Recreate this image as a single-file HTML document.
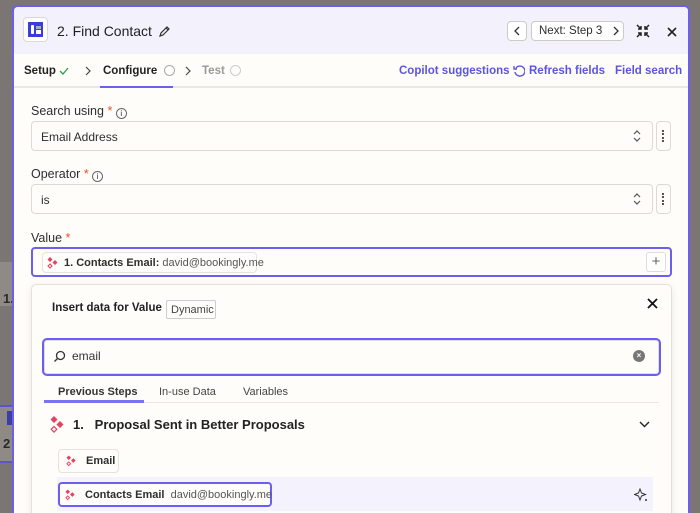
<!DOCTYPE html>
<html><head><meta charset="utf-8"><style>
*{box-sizing:border-box;margin:0;padding:0}
html,body{width:700px;height:513px;overflow:hidden}
body{background:#7b7673;font-family:"Liberation Sans",sans-serif;color:#2d2e2e;position:relative;font-size:13px}
.abs{position:absolute;white-space:nowrap}
svg{flex-shrink:0}
.modal{position:absolute;left:12px;top:5px;width:678px;height:508px;border:2px solid #6a5ff0;border-bottom:none;border-radius:6px 6px 0 0;background:#fffdf9;overflow:hidden}
.hdr{position:absolute;left:0;top:0;right:0;height:47px;background:#f3f2fc}
.tabs{position:absolute;left:0;top:47px;right:0;height:34px;border-bottom:2px solid #ebe8e3}
.lbl{position:absolute;left:17px;font-size:12.5px;color:#2d2e2e;white-space:nowrap}
.req{color:#e8541e}
.inp{position:absolute;left:17px;width:622px;height:30px;border:1px solid #dedad3;border-radius:4px;background:#fffdf9;font-size:12px;padding:8px 9px;white-space:nowrap}
.dots{position:absolute;left:642px;width:15px;height:30px;border:1px solid #dedad3;border-radius:4px}
.link{position:absolute;top:58px;color:#5b54e0;font-size:11.5px;font-weight:bold;white-space:nowrap}
.pill{position:absolute;border:1px solid #e6e2dc;border-radius:4px;background:#fffdf9;font-size:11px;display:flex;align-items:center;white-space:nowrap}
</style></head><body>
<div class="abs" style="left:0;top:262px;width:13px;height:44px;background:#8f8a86"></div>
<div class="abs" style="left:3px;top:291px;font-weight:bold;font-size:13px;color:#2a2a2a">1.</div>
<div class="abs" style="left:0;top:405px;width:13px;height:2px;background:#5a55c8"></div>
<div class="abs" style="left:0;top:407px;width:13px;height:55px;background:#8f8a86"></div>
<div class="abs" style="left:7px;top:411px;width:6px;height:14px;background:#3d3da8"></div>
<div class="abs" style="left:3px;top:436px;font-weight:bold;font-size:13px;color:#2a2a2a">2</div>
<div class="abs" style="left:0;top:461px;width:13px;height:2px;background:#5a55c8"></div>

<div class="modal">
 <div class="hdr">
  <div class="abs" style="left:9px;top:10px;width:25px;height:25px;border:1px solid #dcd9d3;border-radius:4px;background:#fff"></div>
  <div class="abs" style="left:14px;top:15px;width:15px;height:15px;background:#3b3dd8"></div>
  <div class="abs" style="left:17px;top:18px;width:3px;height:9px;background:#fff;border-radius:1px"></div>
  <div class="abs" style="left:22px;top:19px;width:5px;height:3px;background:#aab"></div>
  <div class="abs" style="left:22px;top:23px;width:5px;height:4px;background:#fff"></div>
  <div class="abs" style="left:43px;top:16px;font-size:14px;color:#1f1f1f">2. Find Contact</div>
  <svg class="abs" style="left:144px;top:19px" width="12" height="12" viewBox="0 0 12 12"><path d="M2 10l1-3 6-6 2 2-6 6z M8 2l2 2" fill="none" stroke="#333" stroke-width="1.2"/></svg>
  <div class="abs" style="left:493px;top:14px;width:20px;height:20px;border:1px solid #cfcbc4;border-radius:4px;background:#fff"></div>
  <svg class="abs" style="left:499px;top:19px" width="8" height="10"><path d="M6 1L2 5l4 4" fill="none" stroke="#333" stroke-width="1.3"/></svg>
  <div class="abs" style="left:517px;top:14px;width:93px;height:20px;border:1px solid #cfcbc4;border-radius:4px;background:#fff;font-size:11.5px;padding:3px 0 0 7px">Next: Step 3</div>
  <svg class="abs" style="left:598px;top:19px" width="8" height="10"><path d="M2 1l4 4-4 4" fill="none" stroke="#333" stroke-width="1.3"/></svg>
  <svg class="abs" style="left:622px;top:17px" width="14" height="14" viewBox="0 0 14 14"><path d="M1 1l4 4M5 2v3H2M13 1L9 5M9 2v3h3M1 13l4-4M5 12V9H2M13 13L9 9M9 12V9h3" fill="none" stroke="#222" stroke-width="1.5"/></svg>
  <svg class="abs" style="left:653px;top:20px" width="10" height="10"><path d="M1 1l8 8M9 1L1 9" stroke="#222" stroke-width="1.6"/></svg>
 </div>
 <div class="tabs">
  <div class="abs" style="left:10px;top:11px;font-weight:bold;font-size:11.5px;color:#222">Setup</div>
  <svg class="abs" style="left:45px;top:13px" width="10" height="8"><path d="M1 4l3 3 5-6" fill="none" stroke="#2e9e4a" stroke-width="1.3"/></svg>
  <svg class="abs" style="left:71px;top:12px" width="6" height="10"><path d="M1 1l4 4-4 4" fill="none" stroke="#444" stroke-width="1.2"/></svg>
  <div class="abs" style="left:89px;top:11px;font-weight:bold;font-size:11.5px;color:#222">Configure</div>
  <div class="abs" style="left:150px;top:11px;width:11px;height:11px;border:1px solid #aaa;border-radius:50%"></div>
  <div class="abs" style="left:86px;top:32px;width:73px;height:2px;background:#6a5ff0"></div>
  <svg class="abs" style="left:171px;top:12px" width="6" height="10"><path d="M1 1l4 4-4 4" fill="none" stroke="#444" stroke-width="1.2"/></svg>
  <div class="abs" style="left:188px;top:11px;font-weight:bold;font-size:11.5px;color:#999">Test</div>
  <div class="abs" style="left:216px;top:11px;width:11px;height:11px;border:1px solid #ccc;border-radius:50%"></div>
 </div>
 <div class="link" style="left:385px">Copilot suggestions</div>
 <svg class="abs" style="left:499px;top:57px" width="12" height="13" viewBox="0 0 12 13"><path d="M3 4a5 5 0 1 1-1 4M1 2v3h3" fill="none" stroke="#5b54e0" stroke-width="1.4"/></svg>
 <div class="link" style="left:515px">Refresh fields</div>
 <div class="link" style="left:601px">Field search</div>

 <div class="lbl" style="top:97px">Search using <span class="req">*</span> <span style="display:inline-block;width:11px;height:11px;border:1px solid #666;border-radius:50%;font-size:8px;text-align:center;line-height:9px;vertical-align:-1px">i</span></div>
 <div class="inp" style="top:114px">Email Address</div>
 <svg class="abs" style="left:619px;top:123px" width="8" height="12"><path d="M1 4l3-3 3 3M1 8l3 3 3-3" fill="none" stroke="#555" stroke-width="1.2"/></svg>
 <div class="dots" style="top:114px"></div>
 <div class="abs" style="left:648px;top:123px;width:2px;height:12px;border-left:2px dotted #555"></div>

 <div class="lbl" style="top:160px">Operator <span class="req">*</span> <span style="display:inline-block;width:11px;height:11px;border:1px solid #666;border-radius:50%;font-size:8px;text-align:center;line-height:9px;vertical-align:-1px">i</span></div>
 <div class="inp" style="top:177px">is</div>
 <svg class="abs" style="left:619px;top:186px" width="8" height="12"><path d="M1 4l3-3 3 3M1 8l3 3 3-3" fill="none" stroke="#555" stroke-width="1.2"/></svg>
 <div class="dots" style="top:177px"></div>
 <div class="abs" style="left:648px;top:186px;width:2px;height:12px;border-left:2px dotted #555"></div>

 <div class="lbl" style="top:224px">Value <span class="req">*</span></div>
 <div class="abs" style="left:17px;top:240px;width:641px;height:30px;border:2px solid #6a5ff0;border-radius:4px"></div>
 <div class="pill" style="left:28px;top:245px;width:215px;height:21px;padding-left:4px">
  <svg width="12" height="12" viewBox="0 0 12 12"><path d="M3 0l2.5 2.5L3 5 .5 2.5z M8 3l2.5 2.5L8 8 5.5 5.5z" fill="#e8405f"/><path d="M3 7l2 2-2 2-2-2z" fill="none" stroke="#e8405f" stroke-width="1"/></svg>
  <b style="margin-left:5px">1. Contacts Email:</b>&nbsp;<span style="color:#555">david@bookingly.me</span></div>
 <div class="abs" style="left:632px;top:245px;width:20px;height:20px;border:1px solid #ddd;border-radius:3px;background:#fff;text-align:center;font-size:15px;line-height:17px;color:#666">+</div>

 <div class="abs" style="left:17px;top:277px;width:641px;height:250px;border:1px solid #e4e0da;border-radius:5px;background:#fffdf9;box-shadow:0 2px 8px rgba(0,0,0,.08)">
  <div class="abs" style="left:20px;top:17px;font-weight:bold;font-size:11.5px;color:#222">Insert data for Value</div>
  <div class="abs" style="left:134px;top:15px;width:50px;height:19px;border:1px solid #ccc;border-radius:2px;font-size:11px;color:#444;padding:3px 0 0 4px">Dynamic</div>
  <svg class="abs" style="left:615px;top:13px" width="11" height="11"><path d="M1 1l9 9M10 1L1 10" stroke="#111" stroke-width="1.8"/></svg>
  <div class="abs" style="left:10px;top:53px;width:619px;height:38px;border:2px solid #6a5ff0;border-radius:5px;background:#fffdf9;box-shadow:inset 0 0 0 1px #e0ddd8"></div>
  <svg class="abs" style="left:21px;top:65px" width="13" height="13" viewBox="0 0 13 13"><circle cx="7.5" cy="5.5" r="4" fill="none" stroke="#333" stroke-width="1.3"/><path d="M4.5 8.5L1.5 11.5" stroke="#333" stroke-width="1.3"/></svg>
  <div class="abs" style="left:40px;top:64px;font-size:12px;color:#333">email</div>
  <div class="abs" style="left:601px;top:65px;width:12px;height:12px;border-radius:50%;background:#777;color:#fff;font-size:8px;text-align:center;line-height:12px;font-weight:bold">×</div>
  <div class="abs" style="left:26px;top:101px;font-size:11px;color:#333;font-weight:bold">Previous Steps</div>
  <div class="abs" style="left:127px;top:101px;font-size:11px;color:#444">In-use Data</div>
  <div class="abs" style="left:211px;top:101px;font-size:11px;color:#444">Variables</div>
  <div class="abs" style="left:12px;top:117px;width:615px;height:1px;background:#ebe8e3"></div>
  <div class="abs" style="left:12px;top:115px;width:100px;height:3px;background:#7a72f4"></div>
  <svg class="abs" style="left:17px;top:131px" width="16" height="18" viewBox="0 0 16 18"><path d="M5 0l3.5 3.5L5 7 1.5 3.5z M11 5l3.5 3.5L11 12 7.5 8.5z" fill="#e8405f"/><path d="M5 10.5l2.8 2.8L5 16.1 2.2 13.3z" fill="none" stroke="#e8405f" stroke-width="1.2"/></svg>
  <div class="abs" style="left:41px;top:132px;font-size:13px;font-weight:bold;color:#222">1.&nbsp;&nbsp; Proposal Sent in Better Proposals</div>
  <svg class="abs" style="left:607px;top:136px" width="11" height="7"><path d="M1 1l4.5 4.5L10 1" fill="none" stroke="#222" stroke-width="1.4"/></svg>
  <div class="pill" style="left:26px;top:164px;width:61px;height:24px;padding-left:7px"><svg width="11" height="12" viewBox="0 0 12 12"><path d="M3 0l2.5 2.5L3 5 .5 2.5z M8 3l2.5 2.5L8 8 5.5 5.5z" fill="#e8405f"/><path d="M3 7l2 2-2 2-2-2z" fill="none" stroke="#e8405f" stroke-width="1"/></svg><b style="margin-left:9px">Email</b></div>
  <div class="abs" style="left:25px;top:192px;width:596px;height:34px;background:#f4f3fd"></div>
  <div class="pill" style="left:26px;top:197px;width:214px;height:25px;border:2px solid #6a5ff0;padding-left:5px"><svg width="11" height="12" viewBox="0 0 12 12"><path d="M3 0l2.5 2.5L3 5 .5 2.5z M8 3l2.5 2.5L8 8 5.5 5.5z" fill="#e8405f"/><path d="M3 7l2 2-2 2-2-2z" fill="none" stroke="#e8405f" stroke-width="1"/></svg><b style="margin-left:9px">Contacts Email</b>&nbsp;&nbsp;<span style="color:#555">david@bookingly.me</span></div>
  <svg class="abs" style="left:602px;top:203px" width="14" height="14" viewBox="0 0 14 14"><path d="M6 1l1.5 4 4 1.5-4 1.5L6 12 4.5 8 .5 6.5l4-1.5z" fill="none" stroke="#333" stroke-width="1"/><circle cx="12" cy="12" r="1" fill="#333"/></svg>
 </div>
</div>
</body></html>
